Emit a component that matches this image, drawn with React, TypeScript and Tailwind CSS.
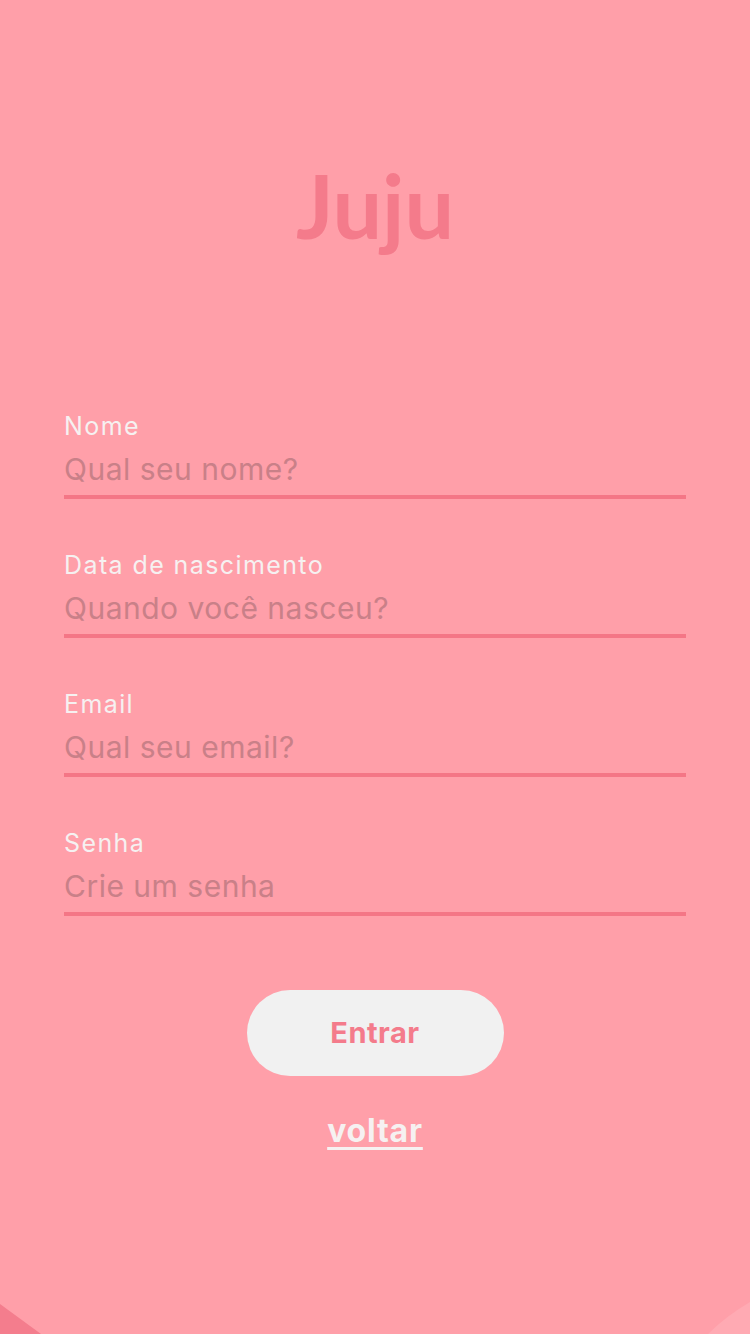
import React from 'react';

const fields = [
  { label: 'Nome', placeholder: 'Qual seu nome?' },
  { label: 'Data de nascimento', placeholder: 'Quando você nasceu?' },
  { label: 'Email', placeholder: 'Qual seu email?' },
  { label: 'Senha', placeholder: 'Crie um senha' },
];

const App = () => {
  return (
    <div
      className="relative min-h-[1334px] w-full overflow-hidden bg-[#ff9fa9]"
      style={{ fontFamily: 'Inter, Lato, sans-serif' }}
    >
      <div className="flex flex-col items-center pt-[161px]">
        <h1
          className="text-[88px] font-bold leading-none text-[#f47b8b]"
          style={{ fontFamily: 'Lato, sans-serif' }}
        >
          Juju
        </h1>
      </div>

      <form className="mt-[162px] flex flex-col gap-[51px] px-[64px]" onSubmit={(e) => e.preventDefault()}>
        {fields.map((field) => (
          <div key={field.label} className="flex flex-col">
            <label className="text-[25px] leading-[30px] tracking-[1.4px] text-[#f6f1f1]">{field.label}</label>
            <input
              type="text"
              placeholder={field.placeholder}
              className="mt-[11px] h-[47px] w-full border-b-4 border-[#f47686] bg-transparent pb-[9px] text-[30px] leading-[36px] tracking-[0.5px] text-[#c47e86] outline-none placeholder:text-[#c98088]"
            />
          </div>
        ))}
      </form>

      <div className="mt-[74px] flex flex-col items-center">
        <button className="h-[86px] w-[257px] rounded-full bg-[#f1f1f1] text-[29px] font-bold tracking-[0.5px] text-[#f47b8b]">
          Entrar
        </button>
        <a href="#" className="mt-[37px] text-[32px] font-bold leading-[36px] tracking-[0.8px] text-[#f6f1f1] underline underline-offset-[5px]">
          voltar
        </a>
      </div>

      <svg className="absolute bottom-0 left-0" width="42" height="30" viewBox="0 0 42 30">
        <path d="M0 0 L41 30 L0 30 Z" fill="#f47d8d" />
      </svg>
      <svg className="absolute bottom-0 right-0" width="42" height="32" viewBox="0 0 42 32">
        <path d="M42 0 Q18 14 0 32 L42 32 Z" fill="#ffaab3" />
      </svg>
    </div>
  );
};

export default App;
